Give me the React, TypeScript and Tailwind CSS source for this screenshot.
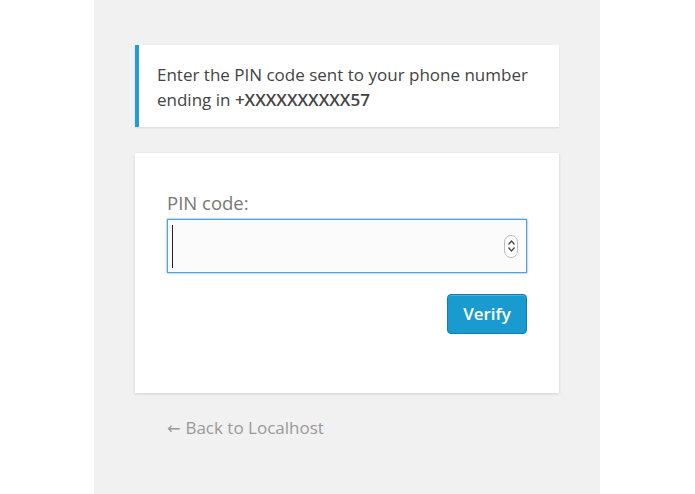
export default function App() {
  return (
    <div className="w-[695px] h-[494px] bg-white flex font-['Open_Sans',sans-serif]">
      <div className="ml-[94px] w-[506px] h-full bg-[#f1f1f1] px-[41px] pt-[45px]">
        <div className="bg-white border-l-4 border-[#1ea0d2] shadow-[0_1px_2px_rgba(0,0,0,0.1)] pl-[18px] pr-3 pt-[17px] h-[82px] text-[17px] leading-[25px] text-[#444]">
          <p>Enter the PIN code sent to your phone number</p>
          <p>ending in <span className="font-semibold">+XXXXXXXXXX57</span></p>
        </div>

        <form className="mt-[26px] bg-white shadow-[0_1px_3px_rgba(0,0,0,0.13)] h-[240px] px-[32px] pt-[38px]">
          <label className="block text-[18.5px] leading-[24px] text-[#777]">PIN code:</label>
          <div className="mt-[4px] h-[54px] border border-[#5b9dd9] bg-[#fbfbfb] shadow-[0_0_2px_rgba(30,140,190,0.8)] flex items-center px-[4px]">
            <div className="w-[1px] h-[43px] bg-[#222]" />
            <div className="ml-auto mr-[4px] w-[14px] h-[23px] rounded-full border border-[#bbb] bg-white flex flex-col items-center justify-center gap-[2px]">
              <svg width="7" height="5" viewBox="0 0 7 5"><path d="M0.5 4.5 L3.5 1 L6.5 4.5" fill="none" stroke="#444" strokeWidth="1.2" /></svg>
              <svg width="7" height="5" viewBox="0 0 7 5"><path d="M0.5 0.5 L3.5 4 L6.5 0.5" fill="none" stroke="#444" strokeWidth="1.2" /></svg>
            </div>
          </div>
          <div className="flex justify-end mt-[21px]">
            <button type="button" className="w-[80px] h-[40px] rounded-[4px] bg-[#1a9bd0] border border-[#0b7fb0] shadow-[inset_0_1px_0_rgba(120,200,230,0.5)] text-white font-semibold text-[17px]">
              Verify
            </button>
          </div>
        </form>

        <div className="mt-[23px] pl-[32px] text-[17px] leading-[24px] text-[#999]">
          <span className="font-['DejaVu_Sans',sans-serif] text-[16px] mr-[5px]">←</span>Back to Localhost
        </div>
      </div>
    </div>
  )
}
